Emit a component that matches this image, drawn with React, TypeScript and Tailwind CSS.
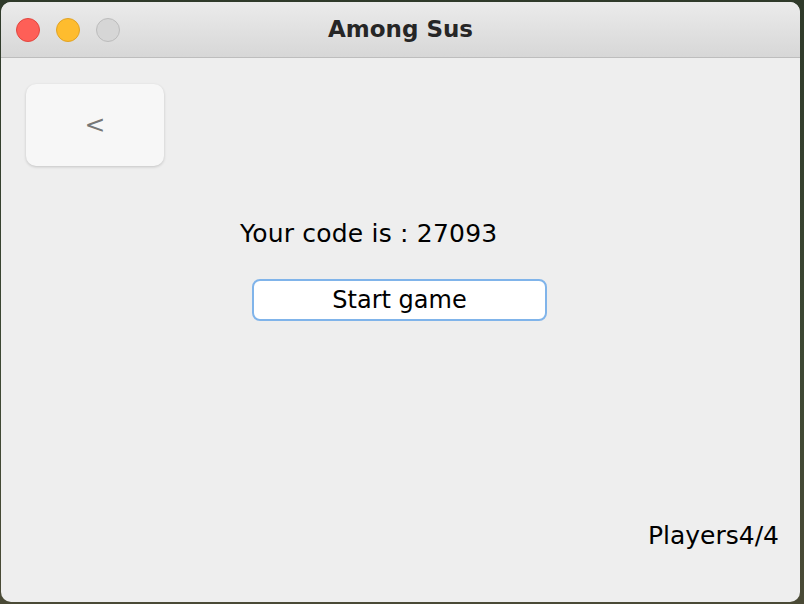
export default function App() {
  return (
    <div className="h-[604px] w-[804px] overflow-hidden bg-[linear-gradient(180deg,#2f3a2a,#3d4833_60%,#4a4a36)] pl-px pr-[4px] pt-[2px] pb-[2px]">
      <div
        className="flex h-full w-full flex-col overflow-hidden rounded-[10px] bg-[#eeeeee] text-black"
        style={{ fontFamily: '"DejaVu Sans", "Noto Sans", sans-serif' }}
      >
        {/* title bar */}
        <div className="relative flex h-[56px] shrink-0 items-center justify-center border-b border-[#bdbdbd] bg-[linear-gradient(180deg,#ebebeb,#d7d7d7)]">
          <div className="absolute left-[15px] top-[16px] flex gap-[16px]">
            <span className="h-[24px] w-[24px] rounded-full border border-[#e2463f] bg-[#fe5f57]" />
            <span className="h-[24px] w-[24px] rounded-full border border-[#e1a325] bg-[#febc2e]" />
            <span className="h-[24px] w-[24px] rounded-full border border-[#bcbcbc] bg-[#d6d6d6]" />
          </div>
          <span className="text-[23px] font-bold text-[#262626]">Among Sus</span>
        </div>

        <div className="flex flex-1 flex-col px-[25px] pt-[26px]">
          <button className="flex h-[82px] w-[138px] items-center justify-center rounded-[10px] bg-[#f7f7f7] text-[25px] text-[#777] shadow-[0_1px_3px_rgba(0,0,0,0.18)]">
            &lt;
          </button>

          <div className="mt-[52px] flex flex-col items-start">
            <p className="ml-[214px] text-[25px] tracking-[0.2px] leading-[32px]">Your code is : 27093</p>
            <button className="ml-[226px] mt-[29px] flex h-[42px] w-[295px] items-center justify-center rounded-[8px] border-2 border-[#80b4ea] bg-white text-[24px]">
              Start game
            </button>
          </div>

          <div className="mt-auto mb-[51px] -mr-[4px] flex justify-end">
            <span className="text-[25px] leading-[30px]">Players4/4</span>
          </div>
        </div>
      </div>
    </div>
  );
}
